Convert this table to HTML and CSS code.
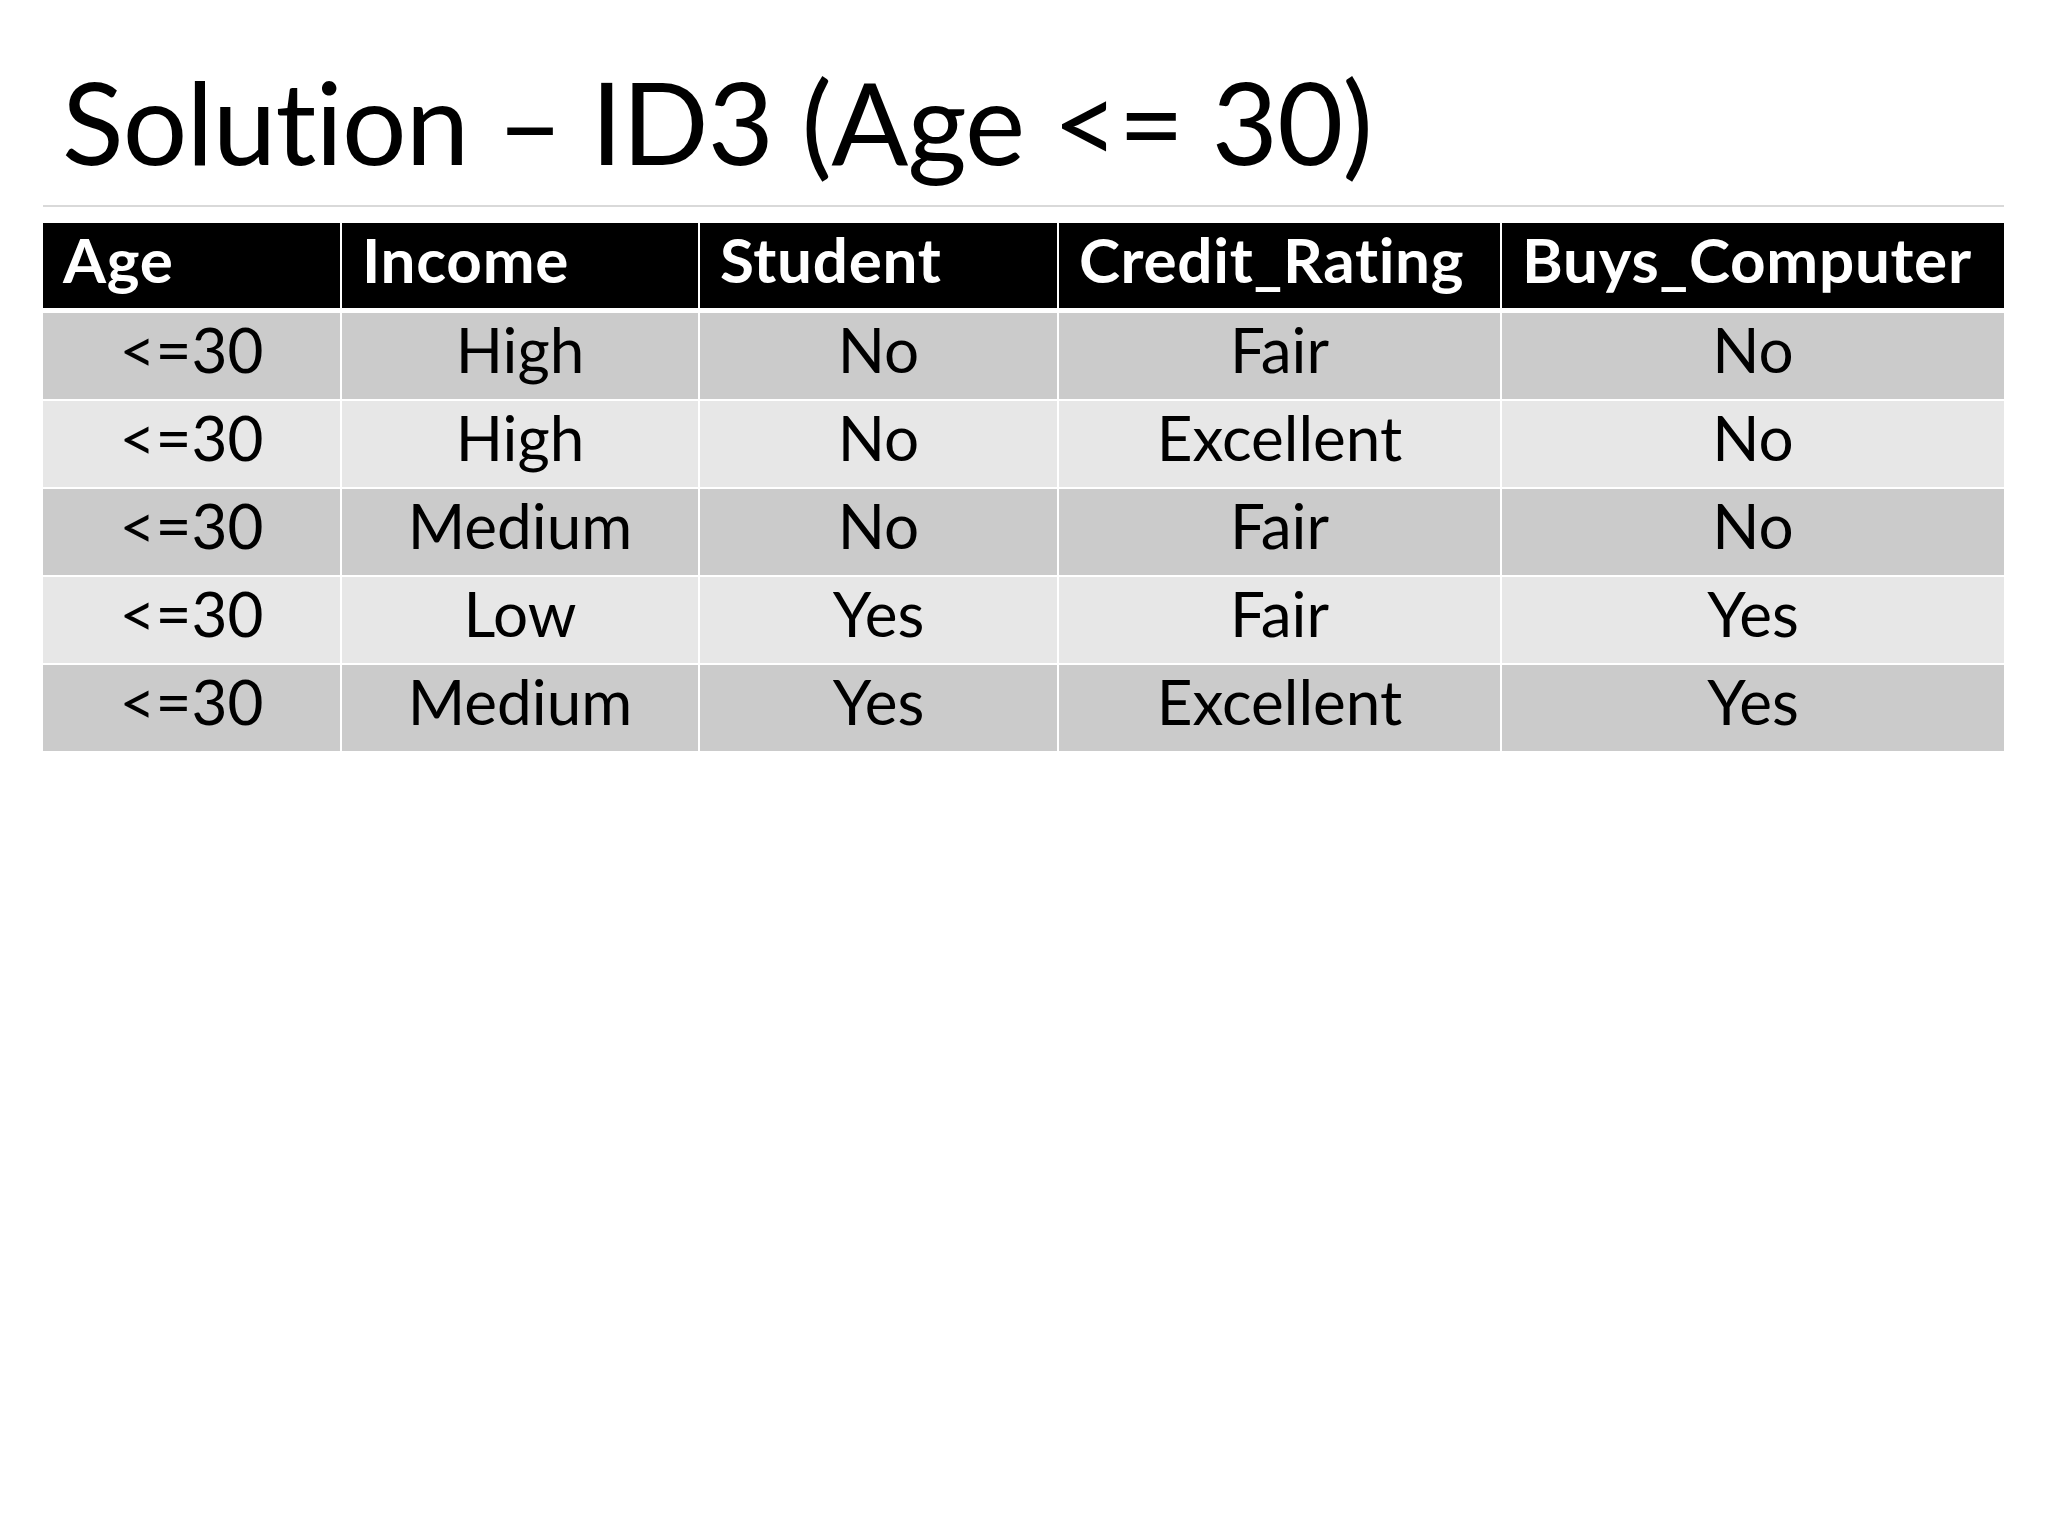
FILE: index.html
```html
<!DOCTYPE html>
<html lang="en">
<head>
<meta charset="utf-8">
<title>Solution – ID3 (Age &lt;= 30)</title>
<link rel="stylesheet" href="styles.css">
</head>
<body>
<div class="slide">
  <h1 class="title">Solution – ID3 (Age &lt;= 30)</h1>
  <div class="divider"></div>
  <div class="table">
    <div class="cell head">Age</div>
    <div class="cell head">Income</div>
    <div class="cell head">Student</div>
    <div class="cell head">Credit_Rating</div>
    <div class="cell head">Buys_Computer</div>

    <div class="cell dark">&lt;=30</div>
    <div class="cell dark">High</div>
    <div class="cell dark">No</div>
    <div class="cell dark">Fair</div>
    <div class="cell dark">No</div>

    <div class="cell light">&lt;=30</div>
    <div class="cell light">High</div>
    <div class="cell light">No</div>
    <div class="cell light">Excellent</div>
    <div class="cell light">No</div>

    <div class="cell dark">&lt;=30</div>
    <div class="cell dark">Medium</div>
    <div class="cell dark">No</div>
    <div class="cell dark">Fair</div>
    <div class="cell dark">No</div>

    <div class="cell light">&lt;=30</div>
    <div class="cell light">Low</div>
    <div class="cell light">Yes</div>
    <div class="cell light">Fair</div>
    <div class="cell light">Yes</div>

    <div class="cell dark">&lt;=30</div>
    <div class="cell dark">Medium</div>
    <div class="cell dark">Yes</div>
    <div class="cell dark">Excellent</div>
    <div class="cell dark">Yes</div>
  </div>
</div>
</body>
</html>
```

FILE: styles.css
```css
html, body {
  margin: 0;
  padding: 0;
  background: #ffffff;
}

.slide {
  width: 2048px;
  height: 1536px;
  box-sizing: border-box;
  padding: 52px 43px 0 43px;
  font-family: Lato, "Liberation Sans", sans-serif;
  color: #000000;
}

.title {
  margin: 0;
  padding-left: 19px;
  font-family: Lato, "Liberation Sans", sans-serif;
  font-weight: 400;
  font-size: 114px;
  line-height: 137px;
  letter-spacing: -0.8px;
  white-space: nowrap;
}

.divider {
  margin-top: 16px;
  height: 2px;
  width: 1961px;
  background: #d9d9d9;
}

.table {
  margin-top: 16px;
  width: 1961px;
  display: grid;
  grid-template-columns: 297px 356px 357px 441px 502px;
  grid-template-rows: 88px repeat(5, 86px);
  column-gap: 2px;
  row-gap: 2px;
}

.cell {
  box-sizing: border-box;
  font-size: 62px;
  line-height: 72px;
  text-align: center;
  white-space: nowrap;
}

.head {
  align-self: start;
  height: 85px;
  background: #000000;
  color: #ffffff;
  font-weight: 700;
  text-align: left;
  padding-left: 20px;
  letter-spacing: 0.7px;
}

.dark {
  background: #cbcbcb;
}

.light {
  background: #e7e7e7;
}
```
